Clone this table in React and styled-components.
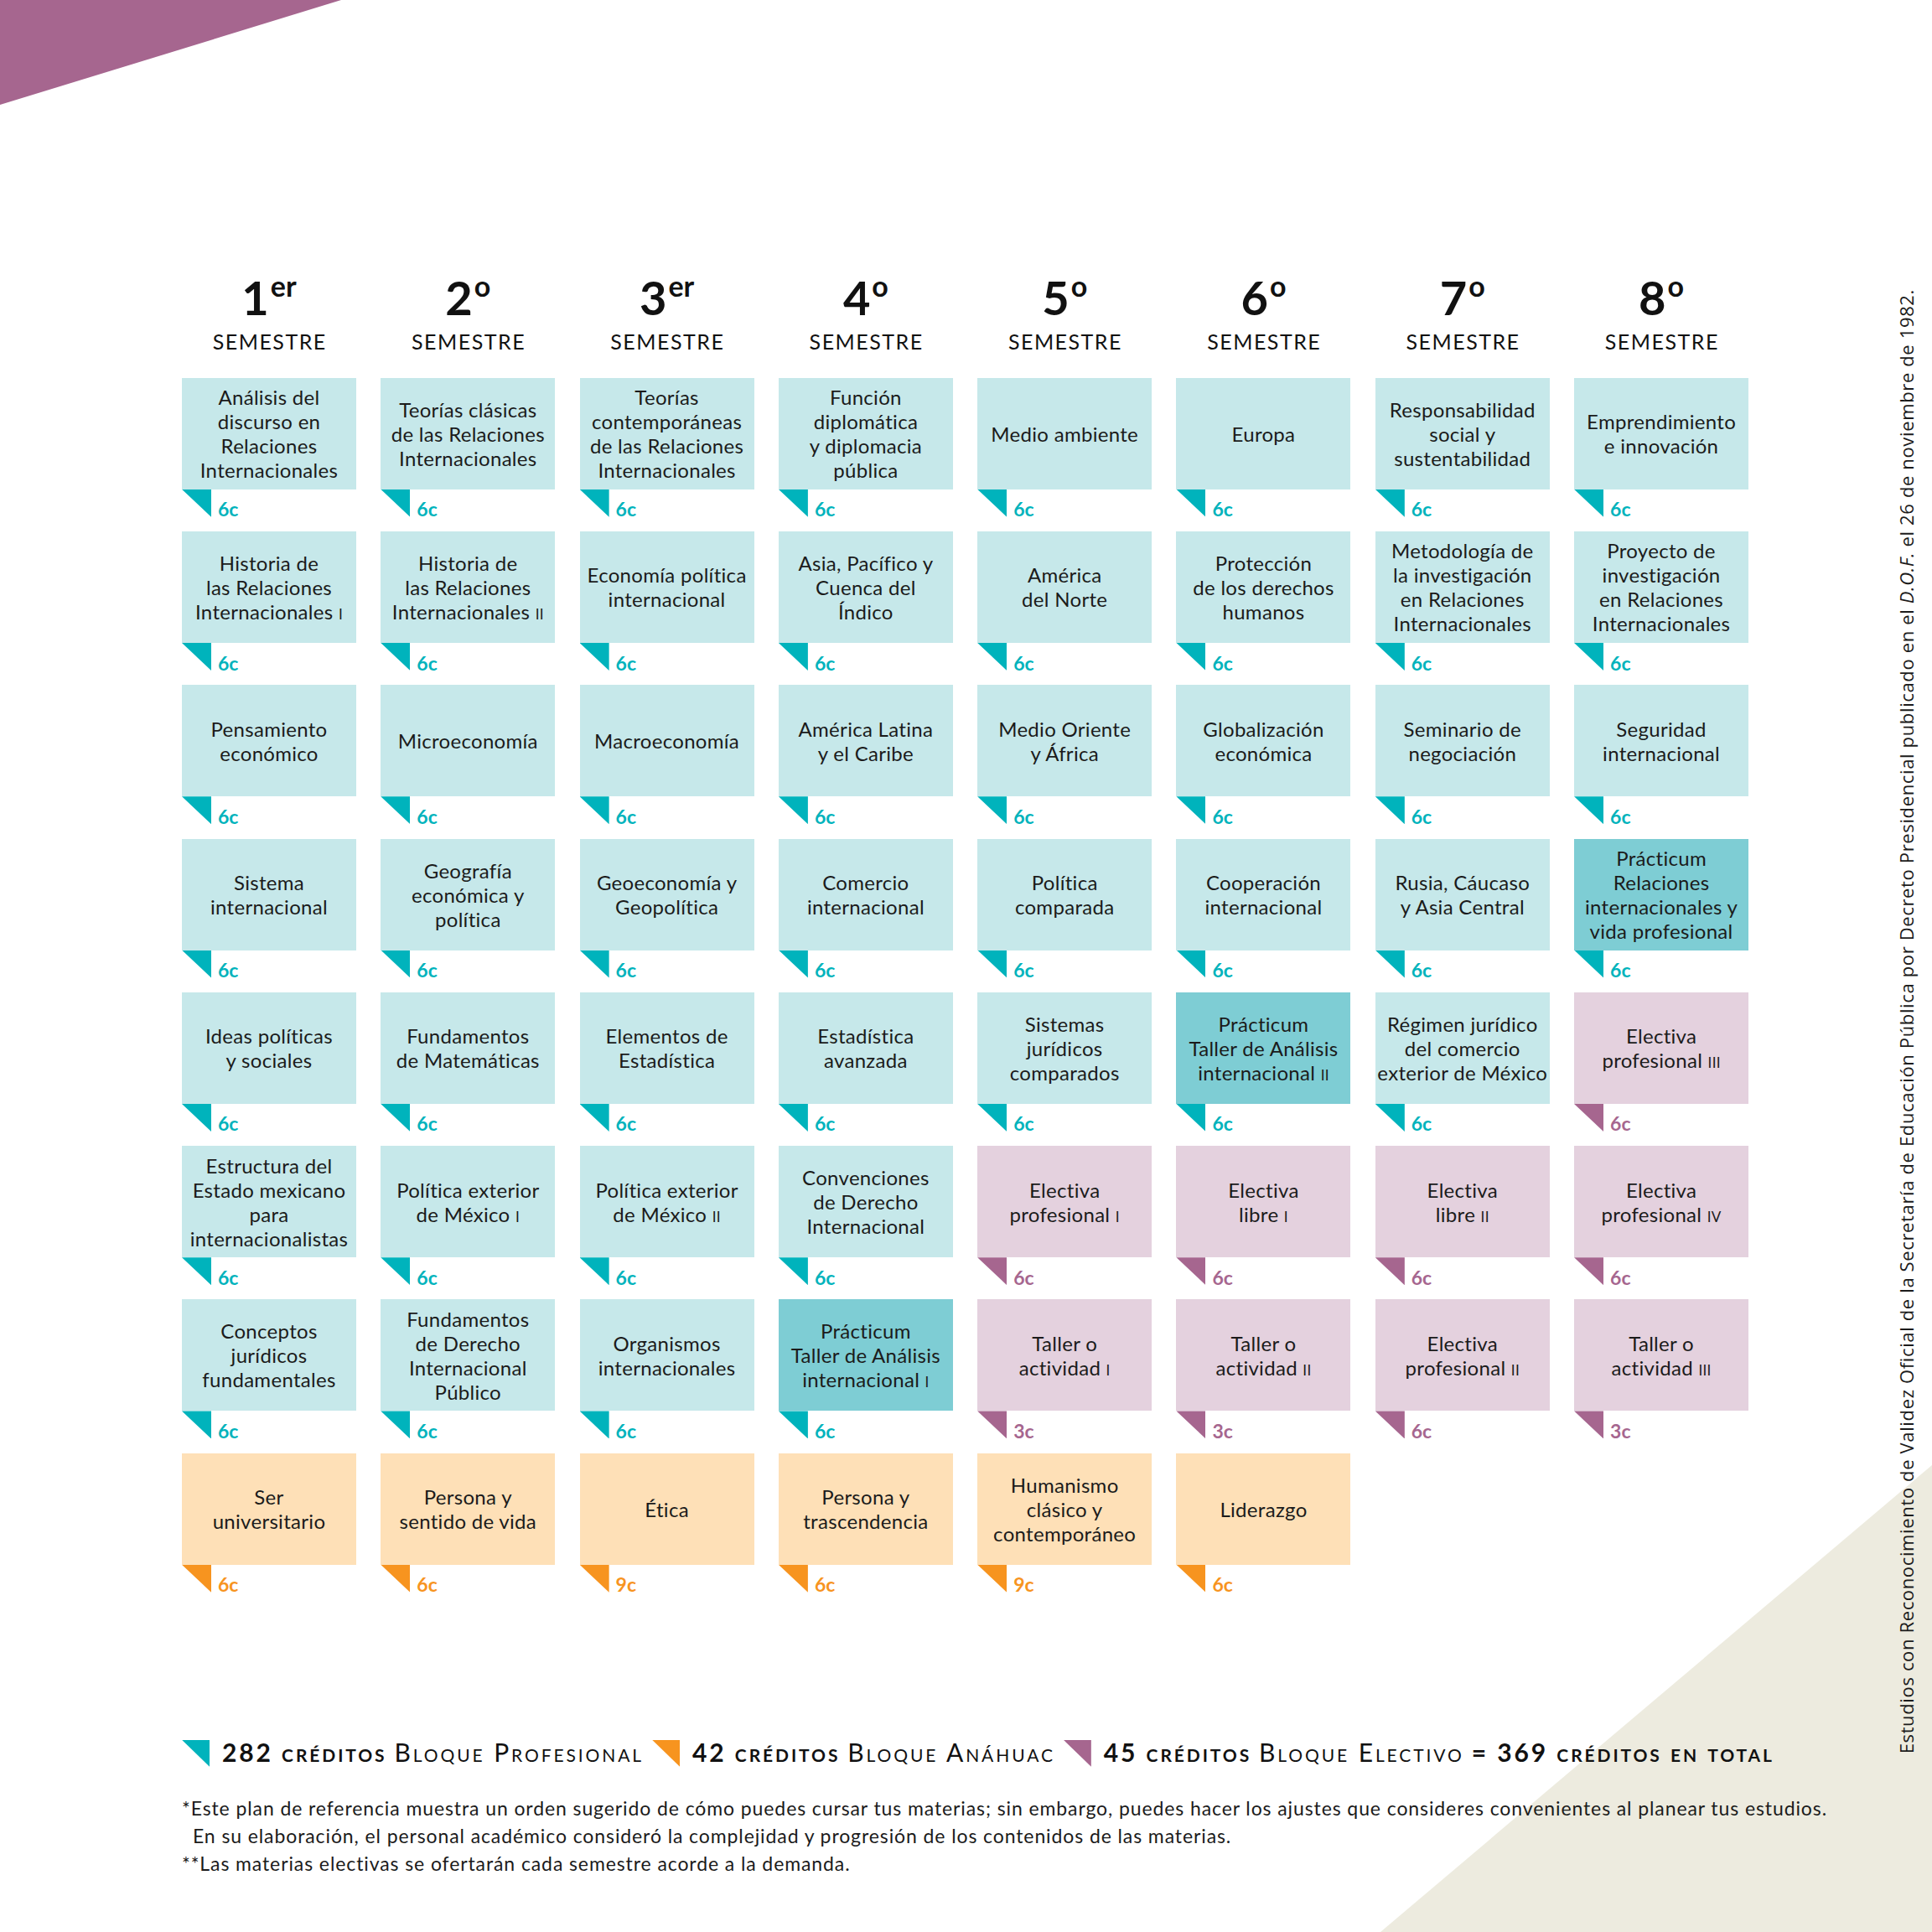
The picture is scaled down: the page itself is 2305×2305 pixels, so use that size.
import React from "react";
import styled, { createGlobalStyle } from "styled-components";

const GlobalStyle = createGlobalStyle`
  html, body {
    margin: 0;
    padding: 0;
    background: #ffffff;
  }
  body {
    font-family: Lato, "Liberation Sans", sans-serif;
    color: #1b1b1b;
  }
`;

// colores por bloque
const BLOCKS = {
  pro: { card: "#c6e8ea", flag: "#00b3bc" },
  prac: { card: "#7ecdd4", flag: "#00b3bc" },
  ana: { card: "#fee0b7", flag: "#f7941f" },
  ele: { card: "#e4d1de", flag: "#a6668f" },
};

const SEMESTERS = [
  {
    num: "1",
    sup: "er",
    courses: [
      { lines: ["Análisis del", "discurso en", "Relaciones", "Internacionales"] },
      { lines: ["Historia de", "las Relaciones", ["Internacionales ", "i"]] },
      { lines: ["Pensamiento", "económico"] },
      { lines: ["Sistema", "internacional"] },
      { lines: ["Ideas políticas", "y sociales"] },
      { lines: ["Estructura del", "Estado mexicano", "para", "internacionalistas"] },
      { lines: ["Conceptos", "jurídicos", "fundamentales"] },
      { lines: ["Ser", "universitario"], block: "ana" },
    ],
  },
  {
    num: "2",
    sup: "o",
    courses: [
      { lines: ["Teorías clásicas", "de las Relaciones", "Internacionales"] },
      { lines: ["Historia de", "las Relaciones", ["Internacionales ", "ii"]] },
      { lines: ["Microeconomía"] },
      { lines: ["Geografía", "económica y", "política"] },
      { lines: ["Fundamentos", "de Matemáticas"] },
      { lines: ["Política exterior", ["de México ", "i"]] },
      { lines: ["Fundamentos", "de Derecho", "Internacional", "Público"] },
      { lines: ["Persona y", "sentido de vida"], block: "ana" },
    ],
  },
  {
    num: "3",
    sup: "er",
    courses: [
      { lines: ["Teorías", "contemporáneas", "de las Relaciones", "Internacionales"] },
      { lines: ["Economía política", "internacional"] },
      { lines: ["Macroeconomía"] },
      { lines: ["Geoeconomía y", "Geopolítica"] },
      { lines: ["Elementos de", "Estadística"] },
      { lines: ["Política exterior", ["de México ", "ii"]] },
      { lines: ["Organismos", "internacionales"] },
      { lines: ["Ética"], block: "ana", credits: "9c" },
    ],
  },
  {
    num: "4",
    sup: "o",
    courses: [
      { lines: ["Función", "diplomática", "y diplomacia", "pública"] },
      { lines: ["Asia, Pacífico y", "Cuenca del", "Índico"] },
      { lines: ["América Latina", "y el Caribe"] },
      { lines: ["Comercio", "internacional"] },
      { lines: ["Estadística", "avanzada"] },
      { lines: ["Convenciones", "de Derecho", "Internacional"] },
      { lines: ["Prácticum", "Taller de Análisis", ["internacional ", "i"]], block: "prac" },
      { lines: ["Persona y", "trascendencia"], block: "ana" },
    ],
  },
  {
    num: "5",
    sup: "o",
    courses: [
      { lines: ["Medio ambiente"] },
      { lines: ["América", "del Norte"] },
      { lines: ["Medio Oriente", "y África"] },
      { lines: ["Política", "comparada"] },
      { lines: ["Sistemas", "jurídicos", "comparados"] },
      { lines: ["Electiva", ["profesional ", "i"]], block: "ele" },
      { lines: ["Taller o", ["actividad ", "i"]], block: "ele", credits: "3c" },
      { lines: ["Humanismo", "clásico y", "contemporáneo"], block: "ana", credits: "9c" },
    ],
  },
  {
    num: "6",
    sup: "o",
    courses: [
      { lines: ["Europa"] },
      { lines: ["Protección", "de los derechos", "humanos"] },
      { lines: ["Globalización", "económica"] },
      { lines: ["Cooperación", "internacional"] },
      { lines: ["Prácticum", "Taller de Análisis", ["internacional ", "ii"]], block: "prac" },
      { lines: ["Electiva", ["libre ", "i"]], block: "ele" },
      { lines: ["Taller o", ["actividad ", "ii"]], block: "ele", credits: "3c" },
      { lines: ["Liderazgo"], block: "ana" },
    ],
  },
  {
    num: "7",
    sup: "o",
    courses: [
      { lines: ["Responsabilidad", "social y", "sustentabilidad"] },
      { lines: ["Metodología de", "la investigación", "en Relaciones", "Internacionales"] },
      { lines: ["Seminario de", "negociación"] },
      { lines: ["Rusia, Cáucaso", "y Asia Central"] },
      { lines: ["Régimen jurídico", "del comercio", "exterior de México"] },
      { lines: ["Electiva", ["libre ", "ii"]], block: "ele" },
      { lines: ["Electiva", ["profesional ", "ii"]], block: "ele" },
    ],
  },
  {
    num: "8",
    sup: "o",
    courses: [
      { lines: ["Emprendimiento", "e innovación"] },
      { lines: ["Proyecto de", "investigación", "en Relaciones", "Internacionales"] },
      { lines: ["Seguridad", "internacional"] },
      { lines: ["Prácticum", "Relaciones", "internacionales y", "vida profesional"], block: "prac" },
      { lines: ["Electiva", ["profesional ", "iii"]], block: "ele" },
      { lines: ["Electiva", ["profesional ", "iv"]], block: "ele" },
      { lines: ["Taller o", ["actividad ", "iii"]], block: "ele", credits: "3c" },
    ],
  },
];

function Semester({ data }) {
  return (
    <Column>
      <Header>
        <Ordinal>
          {data.num}
          <OrdSup>{data.sup}</OrdSup>
        </Ordinal>
        <SemLabel>Semestre</SemLabel>
      </Header>
      <Courses>
        {data.courses.map((c, i) => {
          const block = BLOCKS[c.block || "pro"];
          return (
            <Slot key={i}>
              <Card $bg={block.card}>
                <CardText>
                  {c.lines.map((l, j) => (
                    <Line key={j}>
                      {Array.isArray(l) ? (
                        <>
                          {l[0]}
                          <Roman>{l[1]}</Roman>
                        </>
                      ) : (
                        l
                      )}
                    </Line>
                  ))}
                </CardText>
              </Card>
              <CreditRow>
                <Flag $color={block.flag} />
                <Credits $color={block.flag}>{c.credits || "6c"}</Credits>
              </CreditRow>
            </Slot>
          );
        })}
      </Courses>
    </Column>
  );
}

export default function App() {
  return (
    <>
      <GlobalStyle />
      <Page>
        <Main>
          <Grid>
            {SEMESTERS.map((s) => (
              <Semester key={s.num} data={s} />
            ))}
          </Grid>

          <Legend>
            <LegendItem>
              <Flag $color={BLOCKS.pro.flag} $legend />
              <Strong>282 <Caps>créditos</Caps></Strong>
              <Caps>Bloque Profesional</Caps>
            </LegendItem>
            <LegendItem>
              <Flag $color={BLOCKS.ana.flag} $legend />
              <Strong>42 <Caps>créditos</Caps></Strong>
              <Caps>Bloque Anáhuac</Caps>
            </LegendItem>
            <LegendItem>
              <Flag $color={BLOCKS.ele.flag} $legend />
              <Strong>45 <Caps>créditos</Caps></Strong>
              <Caps>Bloque Electivo</Caps>
              <Strong>= 369 <Caps>créditos en total</Caps></Strong>
            </LegendItem>
          </Legend>

          <Notes>
            <Note>
              *Este plan de referencia muestra un orden sugerido de cómo puedes cursar tus materias; sin embargo, puedes
              hacer los ajustes que consideres convenientes al planear tus estudios.
            </Note>
            <Note $indent>
              En su elaboración, el personal académico consideró la complejidad y progresión de los contenidos de las
              materias.
            </Note>
            <Note>**Las materias electivas se ofertarán cada semestre acorde a la demanda.</Note>
          </Notes>
        </Main>

        <Side>
          Estudios con Reconocimiento de Validez Oficial de la Secretaría de Educación Pública por Decreto Presidencial
          publicado en el <em>D.O.F.</em> el 26 de noviembre de 1982.
        </Side>
      </Page>
    </>
  );
}

const Page = styled.div`
  position: relative;
  width: 2305px;
  height: 2305px;
  overflow: hidden;
  background: #ffffff;
  display: flex;
  align-items: flex-start;

  &::before,
  &::after {
    content: "";
    position: absolute;
    inset: 0;
    z-index: 0;
  }
  &::before {
    background: #a6668f;
    clip-path: polygon(0 0, 407px 0, 0 125px);
  }
  &::after {
    background: #edebdf;
    clip-path: polygon(2305px 1748px, 2305px 2305px, 1647px 2305px);
  }
`;

const Main = styled.main`
  position: relative;
  z-index: 1;
  padding: 327px 0 0 217px;
  width: 1869px;
  display: flex;
  flex-direction: column;
`;

const Grid = styled.div`
  display: grid;
  grid-template-columns: repeat(8, 208px);
  column-gap: 29.3px;
`;

const Column = styled.section`
  display: flex;
  flex-direction: column;
`;

const Header = styled.header`
  display: flex;
  flex-direction: column;
  align-items: center;
  margin-bottom: 28.7px;
  color: #111111;
`;

const Ordinal = styled.div`
  font-weight: 700;
  font-size: 56px;
  line-height: 56px;
  display: flex;
  align-items: flex-start;
`;

const OrdSup = styled.span`
  font-size: 34px;
  line-height: 34px;
  margin-top: -3px;
  margin-left: 2px;
`;

const SemLabel = styled.div`
  font-size: 25px;
  line-height: 30px;
  margin-top: 9px;
  letter-spacing: 1.5px;
  padding-left: 1.5px;
  text-transform: uppercase;
`;

const Courses = styled.div`
  display: flex;
  flex-direction: column;
  gap: 17.3px;
`;

const Slot = styled.article`
  display: flex;
  flex-direction: column;
`;

const Card = styled.div`
  height: 133px;
  background: ${(p) => p.$bg};
  display: flex;
  align-items: center;
  justify-content: center;
  text-align: center;
`;

const CardText = styled.div`
  font-size: 24px;
  line-height: 29px;
  letter-spacing: 0.3px;
  color: #1b1b1b;
`;

const Line = styled.div`
  white-space: nowrap;
`;

const Roman = styled.span`
  font-variant: small-caps;
`;

const CreditRow = styled.div`
  display: flex;
  align-items: flex-start;
  height: 33px;
`;

const Flag = styled.span`
  flex: none;
  width: ${(p) => (p.$legend ? "33px" : "35px")};
  height: ${(p) => (p.$legend ? "32px" : "33px")};
  background: ${(p) => p.$color};
  clip-path: polygon(0 0, 100% 0, 100% 100%);
  margin-right: ${(p) => (p.$legend ? "6px" : "0")};
`;

const Credits = styled.span`
  margin-left: 8px;
  margin-top: 12.6px;
  font-weight: 700;
  font-size: 23px;
  line-height: 23px;
  color: ${(p) => p.$color};
`;

const Legend = styled.div`
  margin-top: 176px;
  display: flex;
  align-items: flex-start;
  gap: 10px;
  font-size: 30px;
  line-height: 28px;
  letter-spacing: 2.9px;
  color: #111111;
  white-space: nowrap;
`;

const LegendItem = styled.div`
  display: flex;
  align-items: flex-start;
  gap: 9px;
`;

const Strong = styled.span`
  font-weight: 700;
`;

const Caps = styled.span`
  font-variant: small-caps;
`;

const Notes = styled.div`
  margin-top: 33.6px;
  font-size: 23px;
  line-height: 33px;
  letter-spacing: 0.9px;
  color: #1b1b1b;
`;

const Note = styled.div`
  white-space: nowrap;
  padding-left: ${(p) => (p.$indent ? "13px" : "0")};
`;

const Side = styled.aside`
  position: relative;
  z-index: 1;
  margin: 345px 0 0 175px;
  writing-mode: vertical-rl;
  transform: rotate(180deg);
  font-family: "Open Sans", "Noto Sans", sans-serif;
  font-size: 22px;
  line-height: 26px;
  letter-spacing: 0.64px;
  color: #1b1b1b;
  white-space: nowrap;

  em {
    font-style: italic;
  }
`;
